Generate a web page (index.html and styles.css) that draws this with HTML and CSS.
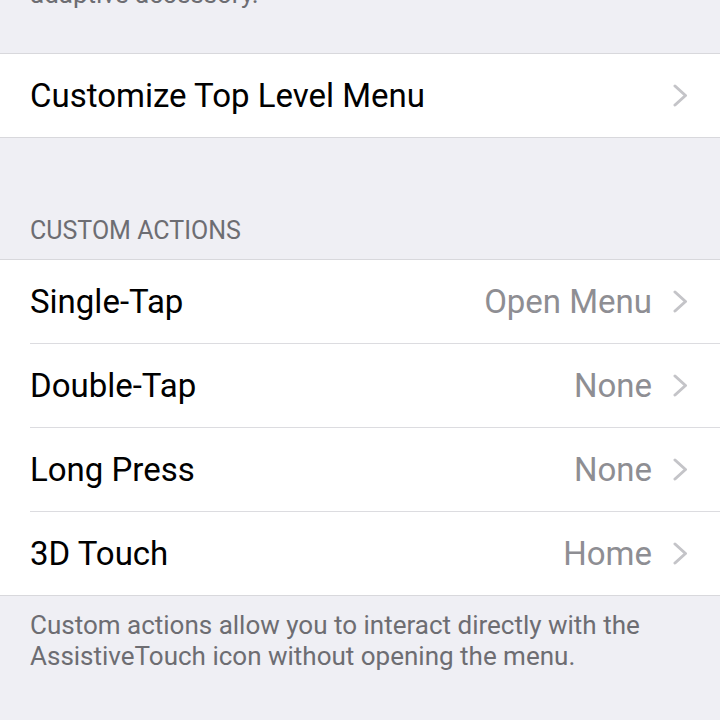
FILE: index.html
```html
<!DOCTYPE html>
<html lang="en">
<head>
  <meta charset="UTF-8">
  <title>AssistiveTouch</title>
  <meta name="viewport" content="width=device-width, initial-scale=1">
  <link rel="stylesheet" href="styles.css">
</head>
<body>

<div class="settings">
  <p class="footer footer-top">adaptive accessory.</p>

  <div class="group group-single">
    <div class="row">
      <span class="label">Customize Top Level Menu</span>
      <svg class="chevron" viewBox="0 0 15 23"><polyline points="2,2 12.5,11.5 2,21"/></svg>
    </div>
  </div>

  <div class="header">Custom Actions</div>
  <div class="group">
    <div class="row">
      <span class="label">Single-Tap</span>
      <span class="value">Open Menu</span>
      <svg class="chevron" viewBox="0 0 15 23"><polyline points="2,2 12.5,11.5 2,21"/></svg>
    </div>
    <div class="row">
      <span class="label">Double-Tap</span>
      <span class="value">None</span>
      <svg class="chevron" viewBox="0 0 15 23"><polyline points="2,2 12.5,11.5 2,21"/></svg>
    </div>
    <div class="row">
      <span class="label">Long Press</span>
      <span class="value">None</span>
      <svg class="chevron" viewBox="0 0 15 23"><polyline points="2,2 12.5,11.5 2,21"/></svg>
    </div>
    <div class="row">
      <span class="label">3D Touch</span>
      <span class="value">Home</span>
      <svg class="chevron" viewBox="0 0 15 23"><polyline points="2,2 12.5,11.5 2,21"/></svg>
    </div>
  </div>
  <p class="footer">Custom actions allow you to interact directly with the<br>AssistiveTouch icon without opening the menu.</p>
</div>

</body>
</html>
```

FILE: styles.css
```css
body {
  margin: 0;
  background: #efeff4;
  font-family: Roboto, "Noto Sans", sans-serif;
  color: #000;
  overflow: hidden;
}

.settings {
  width: 720px;
}

.footer {
  margin: 0;
  padding: 14px 30px 0;
  font-size: 26px;
  line-height: 31px;
  color: #6d6d72;
}

/* last line of the previous section's note, scrolled mostly out of view */
.footer-top {
  margin-top: -21px;
  padding-top: 0;
}

.group {
  background: #fff;
  border-top: 1px solid #d8d8dc;
  border-bottom: 1px solid #d8d8dc;
}

.group-single {
  margin-top: 43px;
}

.row {
  display: flex;
  align-items: center;
  height: 84px;
  padding-right: 32px;
  margin-left: 30px;
  border-bottom: 1px solid #dcdce0;
  box-sizing: border-box;
}

.row:last-child {
  border-bottom: none;
  height: 83px;
}

.label {
  flex: 1;
  font-size: 33px;
}

.value {
  font-size: 33px;
  color: #8e8e93;
  margin-right: 21px;
}

.chevron {
  width: 15px;
  height: 23px;
  fill: none;
  stroke: #c4c4c8;
  stroke-width: 3;
  stroke-linecap: round;
  stroke-linejoin: round;
}

.header {
  margin-top: 79px;
  padding: 0 30px 14px;
  font-size: 25px;
  line-height: 28px;
  color: #6d6d72;
  text-transform: uppercase;
}
```
